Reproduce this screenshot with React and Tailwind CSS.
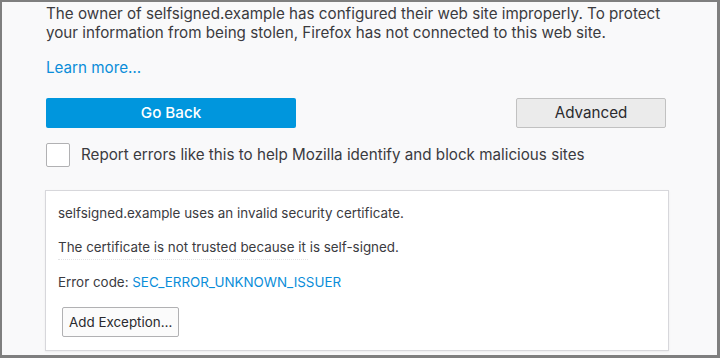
import React from 'react';

const font = { fontFamily: 'Inter, "Liberation Sans", sans-serif' };

const App = () => {
    return (
        <div
            className="w-[720px] h-[358px] overflow-hidden bg-[#f9f9fa] border-l-2 border-t-2 border-r-[3px] border-b-[3px] border-[#7f7f7f] text-[#3b3b3f]"
            style={font}
        >
            <div className="ml-[44px] w-[622px] flex flex-col">
                <p className="mt-[2px] text-[15.2px] leading-[19px]">
                    The owner of selfsigned.example has configured their web site improperly. To protect
                    your information from being stolen, Firefox has not connected to this web site.
                </p>

                <a className="mt-[16px] text-[15.2px] leading-[19px] text-[#0a8dd9] w-fit">Learn more…</a>

                <div className="mt-[21px] flex justify-between">
                    <button className="w-[250px] h-[30px] rounded-[2px] bg-[#0096dd] text-white text-[15.2px] font-medium">
                        Go Back
                    </button>
                    <button className="w-[150px] h-[30px] mr-[2px] rounded-[2px] bg-[#ebebeb] border border-[#c1c1c1] text-[15.2px] text-[#2a2a2e]">
                        Advanced
                    </button>
                </div>

                <label className="mt-[15px] flex items-center gap-[11px]">
                    <span className="w-[24px] h-[24px] rounded-[2px] bg-white border border-[#b1b1b3]"></span>
                    <span className="text-[15.2px] leading-[19px] -mt-[1px]">
                        Report errors like this to help Mozilla identify and block malicious sites
                    </span>
                </label>

                <div className="mt-[23px] -ml-[1px] w-[624px] h-[161px] bg-white border border-[#d7d7db] shadow-[0_1px_2px_rgba(0,0,0,0.06)] px-[12px] pt-[14px] text-[13.4px] leading-[16px]">
                    <p>selfsigned.example uses an invalid security certificate.</p>
                    <p className="mt-[18px]">The certificate is not trusted because it is self-signed.</p>
                    <div className="mt-[4px] mb-[1px] w-[250px] border-t border-dotted border-[#e2e2e4]"></div>
                    <p className="mt-[14px]">
                        Error code: <a className="text-[#0a8dd9]">SEC_ERROR_UNKNOWN_ISSUER</a>
                    </p>
                    <button className="mt-[17px] ml-[4px] h-[30px] px-[6px] rounded-[2px] bg-[#fbfbfb] border border-[#b1b1b3] text-[13.4px] text-[#2a2a2e]">
                        Add Exception…
                    </button>
                </div>
            </div>
        </div>
    );
};

export default App;
